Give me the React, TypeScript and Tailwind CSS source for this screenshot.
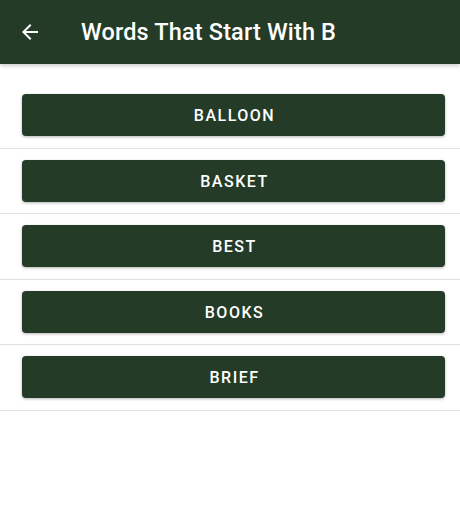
import React from "react";

const words = ["BALLOON", "BASKET", "BEST", "BOOKS", "BRIEF"];

export default function App() {
  return (
    <div className="w-[460px] h-[520px] bg-white" style={{ fontFamily: "Roboto, 'Noto Sans', sans-serif" }}>
      <header className="h-16 bg-[#243b27] flex items-center shadow-[0_2px_4px_rgba(0,0,0,0.2)] relative">
        <button className="ml-[18px] w-6 h-6 flex items-center justify-center text-white">
          <svg width="24" height="24" viewBox="0 0 24 24" fill="currentColor">
            <path d="M20 11H7.83l5.59-5.59L12 4l-8 8 8 8 1.41-1.41L7.83 13H20v-2z" />
          </svg>
        </button>
        <h1 className="ml-[39px] mt-[2px] text-white text-[23.5px] font-medium tracking-[0.15px]">Words That Start With B</h1>
      </header>
      <div className="pt-[19px]">
        {words.map((w) => (
          <div key={w} className="pt-[11px] pb-[11.5px] border-b border-[#e0e0e0]">
            <button className="ml-[22px] w-[423px] h-[42px] pt-[2px] pl-[2px] rounded-[4px] bg-[#243b27] text-white text-[16px] font-medium tracking-[1.5px] shadow-[0_1px_3px_rgba(0,0,0,0.3)] flex items-center justify-center">
              {w}
            </button>
          </div>
        ))}
      </div>
    </div>
  );
}
